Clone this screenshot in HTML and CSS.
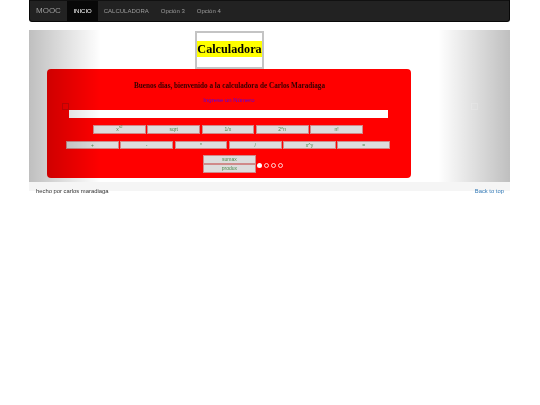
FILE: index.html
```html
<!DOCTYPE html>
<html lang="es">
<head>
    <meta charset="UTF-8">
    <meta name="viewport" content="width=device-width, initial-scale=1.0">
    <title>MOOC - Calculadora</title>
    <link rel="stylesheet" href="styles.css">
</head>
<body>
    <div class="container">
        <nav class="navbar">
            <a class="brand">MOOC</a>
            <a class="nav-item active">INICIO</a>
            <a class="nav-item">CALCULADORA</a>
            <a class="nav-item">Opción 3</a>
            <a class="nav-item">Opción 4</a>
        </nav>

        <div class="carousel">
            <div class="title-box">
                <h1>Calculadora</h1>
            </div>
            <div class="card">
                <h2>Buenos dias, bienvenido a la calculadora de Carlos Maradiaga</h2>
                <label class="prompt">Ingrese un Número</label>
                <input class="display" type="text">
                <div class="keys keys-top">
                    <button>x<sup>n2</sup></button>
                    <button>sqrt</button>
                    <button>1/x</button>
                    <button>2^n</button>
                    <button>n!</button>
                </div>
                <div class="keys keys-ops">
                    <button>+</button>
                    <button>-</button>
                    <button>*</button>
                    <button>/</button>
                    <button>x^y</button>
                    <button>=</button>
                </div>
                <div class="keys-stack">
                    <button>sumax</button>
                    <button>produx</button>
                </div>
            </div>
            <div class="control left"><span class="control-icon"></span></div>
            <div class="control right"><span class="control-icon"></span></div>
            <div class="dots">
                <span class="dot on"></span>
                <span class="dot"></span>
                <span class="dot"></span>
                <span class="dot"></span>
            </div>
        </div>
        <div class="band"></div>
        <footer>
            <span>hecho por carlos maradiaga</span>
            <a class="top-link">Back to top</a>
        </footer>
    </div>
</body>
</html>
```

FILE: styles.css
```css
body {
    margin: 0;
    background: #fff;
    font-family: "Liberation Sans", Arial, sans-serif;
    color: #333;
}

.container {
    width: 481px;
    margin-left: 29px;
    filter: blur(0.3px);
}

.navbar {
    display: flex;
    align-items: stretch;
    height: 22px;
    background: #222;
    border: 1px solid #080808;
    border-top-color: #111;
    border-radius: 0 0 3px 3px;
    box-sizing: border-box;
    font-size: 6px;
    color: #9d9d9d;
}

.brand {
    font-size: 8px;
    line-height: 20px;
    padding: 0 6px;
}

.nav-item {
    line-height: 20px;
    padding: 0 6px;
}

.nav-item.active {
    padding: 0 6px 0 6.5px;
    background: #080808;
    color: #fff;
}

.carousel {
    position: relative;
    height: 152px;
    margin-top: 8px;
    background: #fff;
    overflow: hidden;
}

.title-box {
    display: flex;
    align-items: center;
    justify-content: center;
    box-sizing: border-box;
    width: 69px;
    height: 38px;
    margin-left: 166px;
    margin-top: 1px;
    padding-bottom: 2px;
    border: 2px solid #c4c4c4;
}

.title-box h1 {
    margin: 0;
    background: #ff0;
    font-family: "Liberation Serif", "Times New Roman", serif;
    font-size: 12.2px;
    line-height: 16px;
    font-weight: bold;
    color: #000;
}

.card {
    box-sizing: border-box;
    width: 364px;
    height: 109px;
    margin-left: 18px;
    padding-top: 13px;
    background: #f00;
    border-radius: 4px;
    text-align: center;
}

.card h2 {
    margin: 0;
    padding-left: 1px;
    font-family: "Liberation Serif", "Times New Roman", serif;
    font-size: 7.2px;
    line-height: 9px;
    font-weight: bold;
    color: #300;
}

.prompt {
    display: block;
    margin-top: 5px;
    font-size: 6px;
    line-height: 8px;
    color: #5a00e0;
}

.display {
    display: block;
    box-sizing: border-box;
    width: 319px;
    height: 8px;
    margin: 6px 0 0 22px;
    padding: 0;
    border: none;
    background: #fff;
}

.keys {
    display: flex;
    gap: 1.6px;
}

.keys button, .keys-stack button {
    box-sizing: border-box;
    width: 52.7px;
    height: 8.6px;
    padding: 0;
    background: #ddd;
    border: 1px solid #d08a8a;
    font-family: "Liberation Sans", Arial, sans-serif;
    font-size: 5px;
    line-height: 6px;
    color: #4d8a4d;
}

.keys sup {
    font-size: 3.5px;
    line-height: 0;
}

.keys-top {
    margin: 7px 0 0 46px;
}

.keys-ops {
    margin: 7px 0 0 19px;
}

.keys-stack {
    display: flex;
    flex-direction: column;
    gap: 0.2px;
    margin: 6px 0 0 156px;
}

.control {
    position: absolute;
    top: 0;
    bottom: 0;
    width: 72px;
}

.control.left {
    left: 0;
    background: linear-gradient(to right, rgba(0, 0, 0, 0.25), rgba(0, 0, 0, 0));
}

.control.right {
    right: 0;
    background: linear-gradient(to left, rgba(0, 0, 0, 0.25), rgba(0, 0, 0, 0));
}

.control-icon {
    position: absolute;
    top: 73px;
    width: 7px;
    height: 7px;
    box-sizing: border-box;
    border: 1px solid rgba(255, 255, 255, 0.15);
}

.control.left .control-icon {
    left: 33px;
    border-color: rgba(150, 10, 10, 0.55);
}

.control.right .control-icon {
    right: 32px;
}

.dots {
    position: absolute;
    left: 228px;
    top: 133px;
    display: flex;
    gap: 2px;
}

.dot {
    box-sizing: border-box;
    width: 5px;
    height: 5px;
    border: 1px solid rgba(255, 255, 255, 0.8);
    border-radius: 50%;
}

.dot.on {
    background: #fff;
}

.band {
    height: 9px;
    background: #f5f5f5;
}

footer {
    display: flex;
    justify-content: space-between;
    margin-top: -4px;
    padding: 0 6px 0 7px;
    font-size: 5.85px;
    line-height: 8px;
    color: #333;
}

.top-link {
    color: #337ab7;
}
```
